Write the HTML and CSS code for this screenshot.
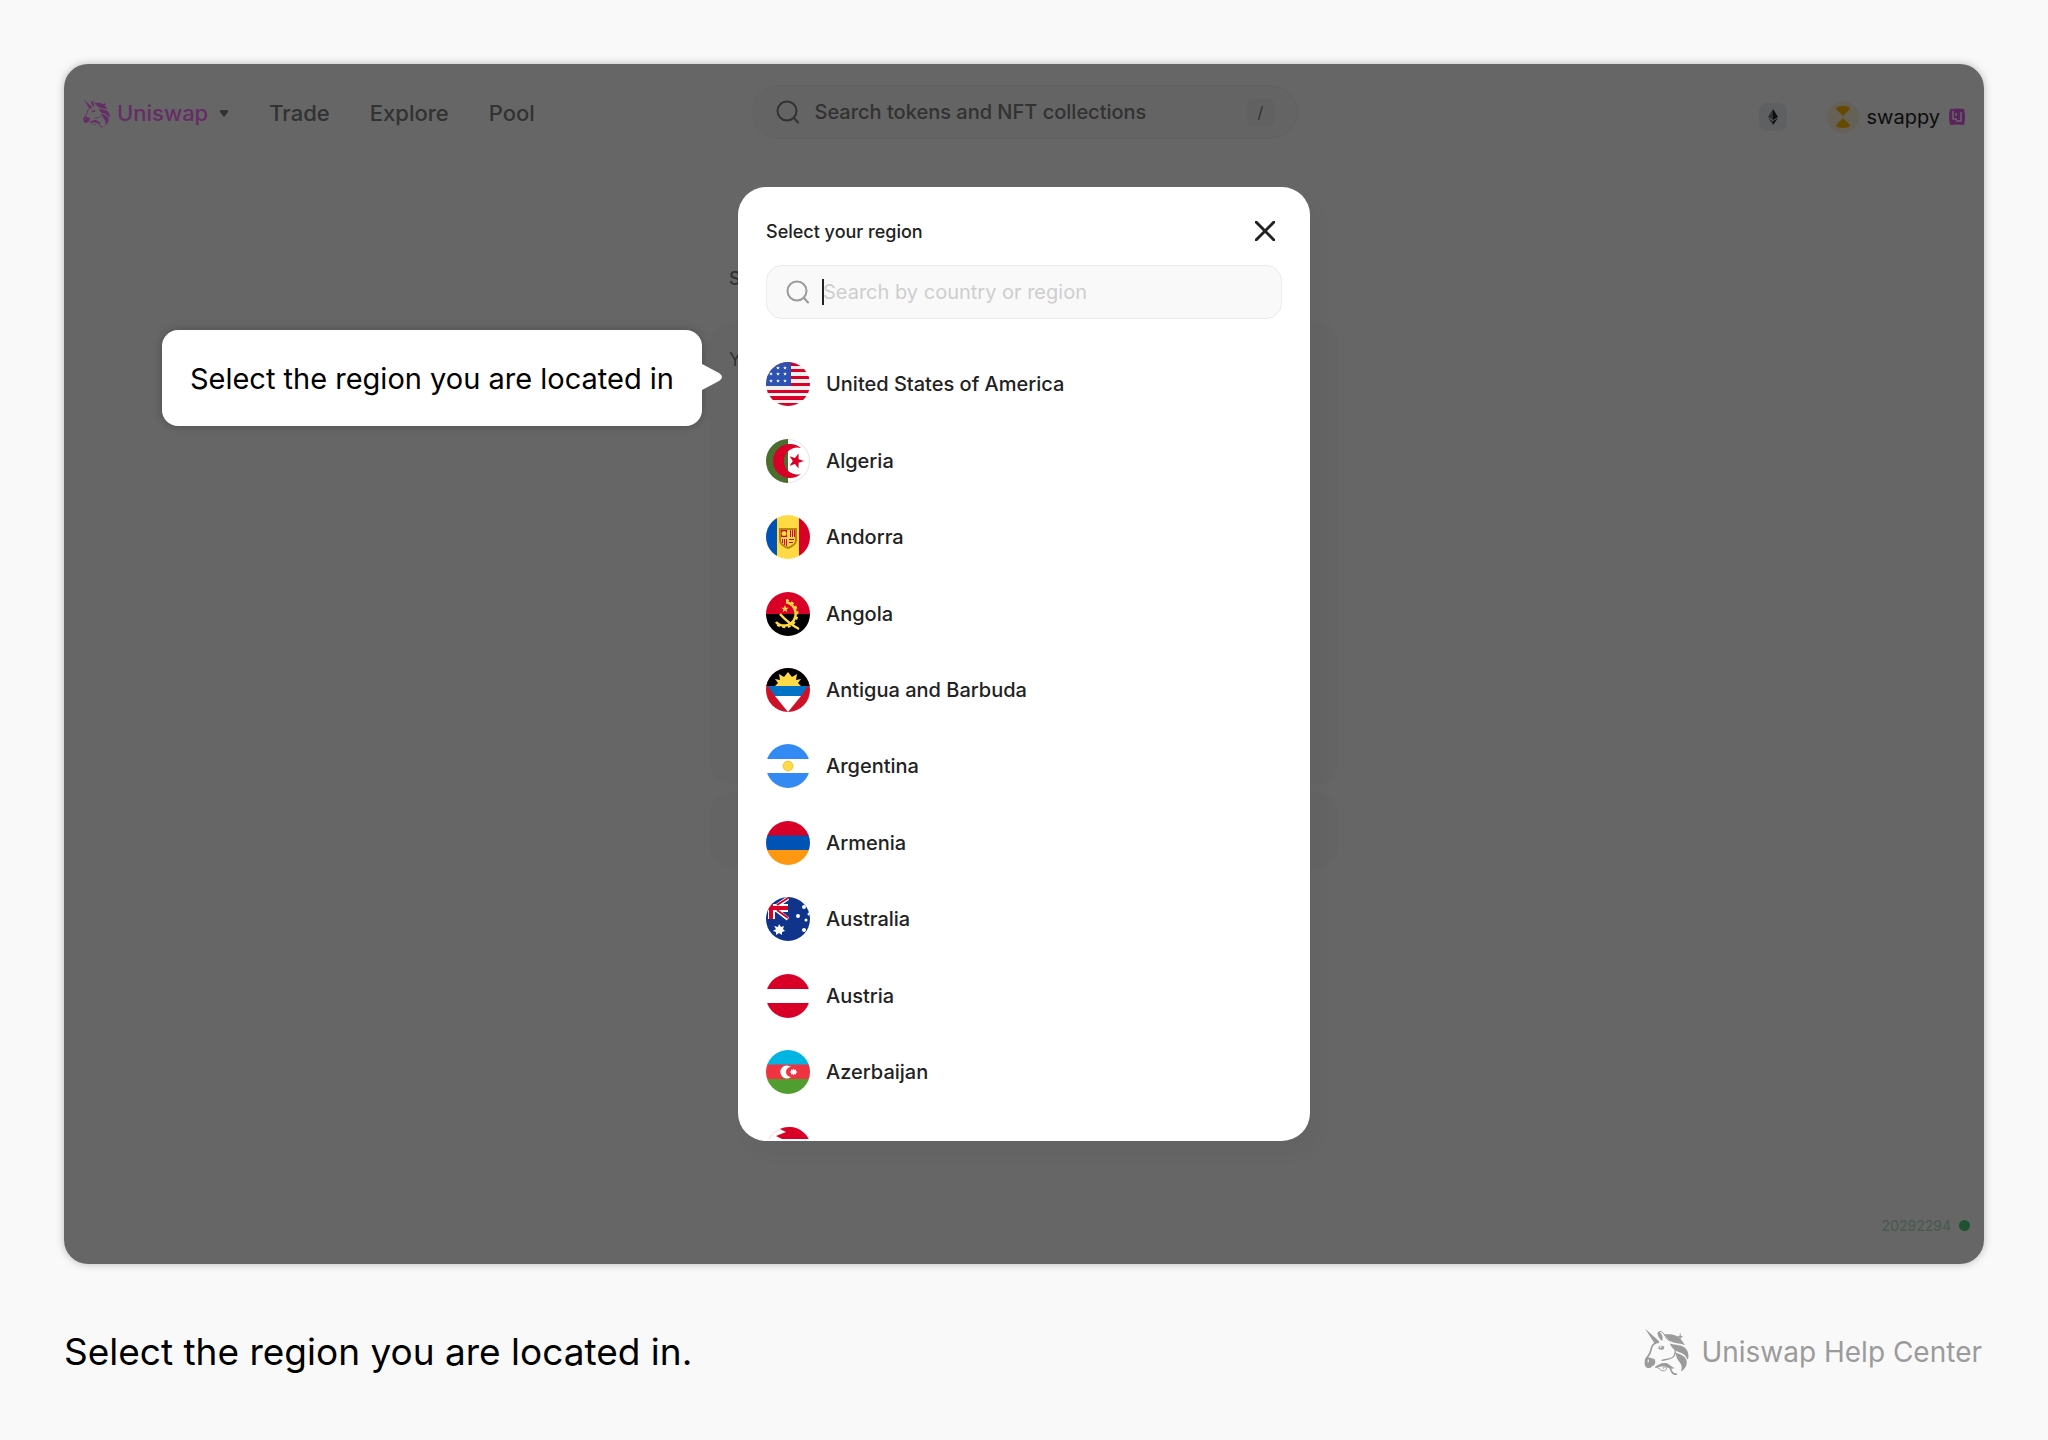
FILE: index.html
```html
<!DOCTYPE html>
<html lang="en">
<head>
  <meta charset="UTF-8">
  <meta name="viewport" content="width=device-width, initial-scale=1.0">
  <title>Uniswap Help Center</title>
  <link rel="stylesheet" href="styles.css">
</head>
<body>

<!-- Shared shapes -->
<svg class="defs" width="0" height="0" aria-hidden="true">
  <symbol id="unicorn" viewBox="0 0 138 146">
    <g fill="currentColor">
      <path d="M3 1 L47 41 C43 43 38 46 34 49 Z"/>
      <path d="M60 20 C80 16 103 20 113 35 C118 40 120 45 126 52 C112 46 100 47 88 43 C77 39 72 30 60 20 Z"/>
      <path d="M79 47 C94 53 121 49 131 66 C137 76 138 87 134 97 C128 82 119 77 106 73 C93 68 85 61 79 47 Z"/>
      <path d="M97 75 C112 79 129 86 131 101 C132 115 125 126 113 133 C118 119 115 111 108 103 C102 95 99 88 97 75 Z"/>
      <path d="M6 91 C14 85 21 93 31 94 C37 100 35 113 28 115 C22 117 22 123 15 122 C6 122 1 115 2 105 C2 100 4 95 6 91 Z"/>
      <path d="M41 13 C42 21 45 32 56 39 C59 30 57 20 47 11 Z"/>
      <ellipse cx="53" cy="60" rx="9" ry="6"/>
      <path d="M33 120 C44 111 54 105 67 107 C78 109 84 120 94 122 C85 127 74 122 66 118 C57 114 48 122 33 120 Z"/>
      <path d="M111 13 L113 23 L120 26 L113 29 L111 38 L109 29 L102 26 L109 23 Z"/>
    </g>
    <g fill="none" stroke="currentColor" stroke-linecap="round">
      <path stroke-width="5" d="M44 43 C34 45 27 49 24 57 C20 69 21 76 13 85 C9 89 6 94 5 100"/>
      <path stroke-width="3" d="M47 10 C56 8 63 18 68 30 C70 34 75 36 80 39"/>
      <path stroke-width="4" d="M95 65 C99 79 92 91 77 94 C69 96 61 97 56 99"/>
      <path stroke-width="3" d="M35 119 C46 119 48 130 58 131 C68 132 72 122 65 119 C60 117 56 121 60 124"/>
      <path stroke-width="5" d="M76 116 C84 124 82 139 94 141 L99 141"/>
    </g>
    <ellipse cx="13" cy="100" rx="2" ry="5" fill="#f9f9f9"/>
    <circle cx="51" cy="58" r="3" fill="#f9f9f9"/>
  </symbol>
  <symbol id="magnifier" viewBox="0 0 24 24">
    <g fill="none" stroke="currentColor" stroke-linecap="round">
      <circle cx="11" cy="11" r="9.5"/>
      <path d="M18 18 L22 22.5"/>
    </g>
  </symbol>
  <symbol id="star" viewBox="-10 -10 20 20">
    <path d="M0 -10 L2.4 -3.2 9.5 -3.1 3.8 1.2 5.9 8.1 0 4 -5.9 8.1 -3.8 1.2 -9.5 -3.1 -2.4 -3.2 Z"/>
  </symbol>
  <clipPath id="round"><circle cx="22" cy="22" r="22"/></clipPath>
</svg>

<main class="stage">
  <header class="topbar">
    <nav class="nav">
      <a class="brand" href="#">
        <svg class="brand-logo"><use href="#unicorn"/></svg>
        <span>Uniswap</span>
        <svg class="brand-arrow" viewBox="0 0 10 8"><path d="M2 1 H8 Q10 1 9 3 L6 7 Q5 8 4 7 L1 3 Q0 1 2 1 Z"/></svg>
      </a>
      <a href="#">Trade</a>
      <a href="#">Explore</a>
      <a href="#">Pool</a>
    </nav>

    <label class="token-search">
      <svg class="search-icon"><use href="#magnifier"/></svg>
      <input type="text" aria-label="Search tokens" placeholder="Search tokens and NFT collections">
      <kbd>/</kbd>
    </label>

    <div class="account">
      <button class="network" aria-label="Network">
        <svg viewBox="0 0 10 16" width="10" height="16">
          <path fill="#777" d="M5 0 L0 8 L5 11 Z M5 12 L0 9 L5 16 Z"/>
          <path fill="#222" d="M5 0 L10 8 L5 11 Z M5 12 L10 9 L5 16 Z"/>
        </svg>
      </button>
      <button class="wallet">
        <svg viewBox="0 0 32 32" width="32" height="32">
          <circle cx="16" cy="16" r="16" fill="#fff2d9"/>
          <path fill="#ffb800" d="M16 15 L9 8 Q9 5 16 5 Q23 5 23 8 Z M16 17 L9 24 Q9 27 16 27 Q23 27 23 24 Z"/>
        </svg>
        <span>swappy</span>
        <svg viewBox="0 0 18 18" width="18" height="18">
          <path fill="#e45be8" d="M2 1 Q9 0 16 1 Q18 9 16 17 Q9 16 2 17 Q0 9 2 1 Z"/>
          <path fill="none" stroke="#fff" stroke-width="1.5" d="M5 3 V11 H9 M8 13 H13 V4 M8 5 V8"/>
        </svg>
      </button>
    </div>
  </header>

  <section class="swap">
    <h2>Swap</h2>
    <div class="swap-panel">You're buying</div>
    <div class="swap-account"></div>
  </section>

  <div class="block-number">20292294 <span class="dot"></span></div>

  <!-- Region picker -->
  <div class="overlay">
    <div class="modal" role="dialog" aria-labelledby="modalTitle">
      <div class="modal-header">
        <h1 id="modalTitle">Select your region</h1>
        <button class="close-btn" aria-label="Close">
          <svg viewBox="0 0 20 20" width="20" height="20"><path d="M1 1 L19 19 M19 1 L1 19"/></svg>
        </button>
      </div>

      <label class="region-search">
        <svg class="search-icon"><use href="#magnifier"/></svg>
        <span class="caret"></span>
        <input type="text" aria-label="Search regions" placeholder="Search by country or region">
      </label>

      <div class="region-scroll">
        <ul class="region-list">
          <li>
            <svg class="flag" viewBox="0 0 44 44"><g clip-path="url(#round)">
              <path fill="#f0f0f0" d="M0 0 H44 V44 H0 Z"/>
              <path fill="#d80027" d="M0 0 H44 V4 H0 Z M0 7 H44 V10 H0 Z M0 14 H44 V17 H0 Z M0 21 H44 V24 H0 Z M0 28 H44 V31 H0 Z M0 34 H44 V38 H0 Z M0 41 H44 V44 H0 Z"/>
              <path fill="#2e52b2" d="M0 0 H25 V24 H0 Z"/>
              <g fill="#fff">
                <use href="#star" x="10" y="4" width="4" height="4"/><use href="#star" x="17" y="4" width="4" height="4"/>
                <use href="#star" x="3" y="10" width="4" height="4"/><use href="#star" x="10" y="10" width="4" height="4"/><use href="#star" x="17" y="10" width="4" height="4"/>
                <use href="#star" x="3" y="17" width="4" height="4"/><use href="#star" x="10" y="17" width="4" height="4"/><use href="#star" x="17" y="17" width="4" height="4"/>
              </g>
            </g></svg>
            <span>United States of America</span>
          </li>
          <li>
            <svg class="flag" viewBox="0 0 44 44">
              <circle cx="22" cy="22" r="21.5" fill="#fff" stroke="#e4e4e4"/>
              <path fill="#496e2d" d="M22 0 A22 22 0 0 0 22 44 Z"/>
              <path fill="#d80027" d="M35 9 A17 17 0 1 0 35 35 A13.5 13.5 0 1 1 35 9 Z"/>
              <use href="#star" x="22" y="14" width="16" height="16" fill="#d80027" transform="rotate(18 30 22)"/>
            </svg>
            <span>Algeria</span>
          </li>
          <li>
            <svg class="flag" viewBox="0 0 44 44"><g clip-path="url(#round)">
              <path fill="#0052b4" d="M0 0 H11 V44 H0 Z"/>
              <path fill="#ffda44" d="M11 0 H33 V44 H11 Z"/>
              <path fill="#d80027" d="M33 0 H44 V44 H33 Z"/>
              <path fill="#ffda44" stroke="#b8860b" stroke-width="2" d="M14 14 H30 V25 Q30 30 22 33 Q14 30 14 25 Z"/>
              <path fill="#d80027" d="M15 15 H21 V22 H15 Z M16 24 H17 V28 H16 Z M18 24 H19 V30 H18 Z M20 24 H21 V31 H20 Z M24 15 H25 V22 H24 Z M26 15 H27 V22 H26 Z M28 15 H29 V22 H28 Z M23 24 H28 V25 H23 Z M23 27 H27 V28 H23 Z"/>
              <circle cx="18" cy="18.5" r="2.5" fill="#ffda44"/>
            </g></svg>
            <span>Andorra</span>
          </li>
          <li>
            <svg class="flag" viewBox="0 0 44 44"><g clip-path="url(#round)">
              <path fill="#d80027" d="M0 0 H44 V22 H0 Z"/>
              <path d="M0 22 H44 V44 H0 Z"/>
              <g fill="none" stroke="#ffda44">
                <path stroke-width="2.5" d="M20 10 A12 12 0 0 1 22 33 Q14 35 10 30"/>
                <path stroke-width="2" stroke-dasharray="3 2.6" d="M20 8 A14 14 0 0 1 22 35 Q14 36 9 31"/>
                <path stroke-width="2.5" d="M14 22 Q22 31 33 37"/>
              </g>
              <use href="#star" x="15" y="13" width="8" height="8" fill="#ffda44"/>
            </g></svg>
            <span>Angola</span>
          </li>
          <li>
            <svg class="flag" viewBox="0 0 44 44"><g clip-path="url(#round)">
              <path fill="#ce1126" d="M0 0 H44 V44 H0 Z"/>
              <path d="M0 0 H44 V18 H0 Z"/>
              <path fill="#ffda44" d="M9 18 L12 15 9 11 14 12 13 6 18 9 22 4 26 9 31 6 30 12 35 11 32 15 35 18 Z"/>
              <path fill="#0072c6" d="M2 18 H42 L35 28 H9 Z"/>
              <path fill="#fff" d="M9 28 H35 L22 44 Z"/>
            </g></svg>
            <span>Antigua and Barbuda</span>
          </li>
          <li>
            <svg class="flag" viewBox="0 0 44 44"><g clip-path="url(#round)">
              <path fill="#fff" d="M0 0 H44 V44 H0 Z"/>
              <path fill="#338af3" d="M0 0 H44 V15 H0 Z M0 29 H44 V44 H0 Z"/>
              <circle cx="22" cy="22" r="5" fill="#ffda44" stroke="#d6ab00" stroke-width=".5"/>
            </g></svg>
            <span>Argentina</span>
          </li>
          <li>
            <svg class="flag" viewBox="0 0 44 44"><g clip-path="url(#round)">
              <path fill="#d80027" d="M0 0 H44 V15 H0 Z"/>
              <path fill="#0052b4" d="M0 14.5 H44 V29 H0 Z"/>
              <path fill="#ff9811" d="M0 29 H44 V44 H0 Z"/>
            </g></svg>
            <span>Armenia</span>
          </li>
          <li>
            <svg class="flag" viewBox="0 0 44 44"><g clip-path="url(#round)">
              <path fill="#10338c" d="M0 0 H44 V44 H0 Z"/>
              <path fill="none" stroke="#fff" stroke-width="4" d="M8 11 L22 1 M8 11 L22 22"/>
              <path fill="#fff" d="M2 7 H22 V15 H9 V22 H2 Z"/>
              <path fill="none" stroke="#d80027" stroke-width="2" d="M11 8 L22 1 M11 13 L22 21"/>
              <path fill="#d80027" d="M0 9 H22 V13 H7 V22 H3 V13 H0 Z M3 6 H7 V10 H3 Z"/>
              <g fill="#fff">
                <path d="M13 27 L15 30 18 29 17 32 19 34 16 35 16 38 13 36 10 38 10 35 7 34 10 32 8 29 12 30 Z"/>
                <circle cx="32" cy="19" r="2"/><circle cx="38" cy="10" r="2"/><circle cx="40" cy="23" r="1.5"/>
                <circle cx="38" cy="33" r="2"/><circle cx="43" cy="17" r="1.5"/>
              </g>
            </g></svg>
            <span>Australia</span>
          </li>
          <li>
            <svg class="flag" viewBox="0 0 44 44"><g clip-path="url(#round)">
              <path fill="#fff" d="M0 0 H44 V44 H0 Z"/>
              <path fill="#d80027" d="M0 0 H44 V15 H0 Z M0 29 H44 V44 H0 Z"/>
            </g></svg>
            <span>Austria</span>
          </li>
          <li>
            <svg class="flag" viewBox="0 0 44 44"><g clip-path="url(#round)">
              <path fill="#00b5e2" d="M0 0 H44 V15 H0 Z"/>
              <path fill="#ef3340" d="M0 14.5 H44 V29 H0 Z"/>
              <path fill="#509e2f" d="M0 29 H44 V44 H0 Z"/>
              <path fill="#fff" d="M25 17 A6.500 6.500 0 1 0 25 27 A5 5 0 1 1 25 17 Z"/>
              <path fill="#fff" d="M27.500 18.500 L28.500 20 30 19.500 30 21 31.500 22 30 23 30 24.500 28.500 24 27.500 25.500 26.500 24 25 24.500 25 23 24 22 25 21 25 19.500 26.500 20 Z"/>
            </g></svg>
            <span>Azerbaijan</span>
          </li>
          <li>
            <svg class="flag" viewBox="0 0 44 44">
              <circle cx="22" cy="22" r="21.5" fill="#fff" stroke="#f7d5dc"/>
              <path fill="#d80027" d="M14 2 A22 22 0 1 1 14 42 L20 38 10 34 20 29 10 25 20 20 10 15 20 14 10 9 20 5 Z"/>
            </svg>
          </li>
        </ul>
      </div>

      <div class="callout">Select the region you are located in
        <svg class="callout-tail" viewBox="0 0 20 26" width="20" height="26"><path fill="#fff" d="M0 0 L17 9 Q23 13 17 17 L0 26 Z"/></svg>
      </div>
    </div>
  </div>
</main>

<footer class="footer">
  <p>Select the region you are located in.</p>
  <a class="help-center" href="#">
    <svg class="help-logo"><use href="#unicorn"/></svg>
    <span>Uniswap Help Center</span>
  </a>
</footer>

</body>
</html>
```
FILE: styles.css
```css
/* Global Styles */
* {
  box-sizing: border-box;
}

body {
  font-family: Inter, 'Liberation Sans', sans-serif;
  margin: 0;
  padding: 64px;
  background-color: #f9f9f9;
  color: #222;
}

h1, h2, p, ul {
  margin: 0;
  padding: 0;
}

a {
  color: inherit;
  text-decoration: none;
}

button, input {
  font: inherit;
  color: inherit;
  border: none;
  padding: 0;
  background: none;
}

button {
  cursor: pointer;
}

input {
  min-width: 0;
  flex: 1;
  outline: none;
}

.defs {
  position: absolute;
}

/* Page behind the modal */
.stage {
  position: relative;
  min-height: calc(100vh - 240px);
  overflow: hidden;
  border-radius: 24px;
  background-color: #fff;
  box-shadow: 0 0 8px rgba(0, 0, 0, 0.25);
}

.topbar {
  display: grid;
  grid-template-columns: 1fr 546px 1fr;
  align-items: center;
  padding: 21px 18px 0 19px;
}

.nav {
  display: flex;
  align-items: center;
  gap: 40px;
  padding-top: 2px;
  font-size: 22px;
  font-weight: 500;
  color: #7d7d7d;
}

.brand {
  display: flex;
  align-items: center;
  gap: 7px;
  color: #fc72ff;
}

.brand-logo {
  width: 27px;
  height: 29px;
}

.brand-arrow {
  width: 10px;
  height: 8px;
  margin-left: 4px;
  fill: #7d7d7d;
}

.search-icon {
  width: 24px;
  height: 24px;
  stroke-width: 2;
}

.token-search {
  display: flex;
  align-items: center;
  gap: 15px;
  height: 54px;
  padding: 0 22px 0 23px;
  border: 1px solid #f2f2f2;
  border-radius: 27px;
  background-color: #fbfbfb;
  font-size: 20px;
  font-weight: 500;
  color: #7d7d7d;
}

.token-search input::placeholder {
  color: #7d7d7d;
  opacity: 1;
}

kbd {
  width: 28px;
  border-radius: 6px;
  background-color: #f2f2f2;
  font: 16px/27px Inter, sans-serif;
  text-align: center;
}

.account {
  display: flex;
  justify-content: flex-end;
  align-items: center;
  gap: 40px;
  padding-top: 10px;
}

.network {
  display: flex;
  align-items: center;
  justify-content: center;
  width: 28px;
  height: 28px;
  border-radius: 8px;
  background-color: #eef0f5;
}

.wallet {
  display: flex;
  align-items: center;
  gap: 8px;
  font-size: 20px;
}

.swap {
  width: 630px;
  margin: 128px auto 0;
  font-size: 18px;
  color: #7d7d7d;
}

.swap h2 {
  padding-left: 20px;
  font-size: 18px;
  font-weight: 500;
  line-height: 24px;
}

.swap-panel {
  height: 464px;
  margin-top: 30px;
  padding: 28px 20px;
  border-radius: 24px;
  background-color: #fbfbfb;
}

.swap-account {
  height: 76px;
  margin-top: 7px;
  border-radius: 24px;
  background-color: #f9f9f9;
}

.block-number {
  display: flex;
  align-items: center;
  gap: 8px;
  position: absolute;
  right: 14px;
  bottom: 30px;
  font-size: 14px;
  color: #b1e2c0;
}

.dot {
  width: 11px;
  height: 11px;
  border-radius: 50%;
  background-color: #4bcd7a;
}

/* Region modal */
.overlay {
  position: absolute;
  inset: 0;
  display: flex;
  justify-content: center;
  padding: 123px 0;
  background-color: rgba(0, 0, 0, 0.6);
}

.modal {
  position: relative;
  display: flex;
  flex-direction: column;
  width: 572px;
  padding: 28px 28px 2px;
  border-radius: 28px;
  background-color: #fff;
  box-shadow: 8px 12px 20px rgba(0, 0, 0, 0.03);
}

.modal-header {
  display: flex;
  align-items: center;
  justify-content: space-between;
  height: 32px;
  padding-right: 7px;
}

.modal-header h1 {
  font-size: 18px;
  font-weight: 500;
}

.close-btn {
  display: flex;
}

.close-btn path {
  fill: none;
  stroke: #222;
  stroke-width: 3;
  stroke-linecap: round;
}

.region-search {
  display: flex;
  align-items: center;
  gap: 13px;
  position: relative;
  height: 54px;
  margin-top: 18px;
  padding: 0 19px;
  border: 1px solid #ebebeb;
  border-radius: 16px;
  background-color: #f9f9f9;
  font-size: 20px;
  color: #9b9b9b;
}

.region-search input::placeholder {
  color: #cecece;
  opacity: 1;
}

.caret {
  position: absolute;
  left: 55px;
  width: 2px;
  height: 26px;
  background-color: #222;
}

.region-scroll {
  flex: 1;
  min-height: 0;
  margin-top: 27px;
  overflow: hidden;
}

.region-list {
  display: flex;
  flex-direction: column;
  height: 841px;
  list-style: none;
  font-size: 20px;
  font-weight: 500;
}

.region-list li {
  display: flex;
  flex: 1;
  align-items: center;
  gap: 16px;
}

.flag {
  width: 44px;
  height: 44px;
}

.callout {
  position: absolute;
  top: 143px;
  right: calc(100% + 36px);
  padding: 2px 28px 0;
  border-radius: 16px;
  background-color: #fff;
  box-shadow: 0 0 8px rgba(0, 0, 0, 0.25);
  color: #000;
  font-size: 29px;
  line-height: 94px;
  white-space: nowrap;
}

.callout-tail {
  position: absolute;
  top: 34px;
  left: 100%;
}

/* Footer */
.footer {
  display: flex;
  align-items: center;
  justify-content: space-between;
  padding: 64px 2px 0 0;
}

.footer p {
  color: #000;
  font-size: 37px;
  line-height: 48px;
}

.help-center {
  display: flex;
  align-items: center;
  gap: 12px;
  font-size: 28px;
  color: #9b9b9b;
}

.help-logo {
  width: 45px;
  height: 48px;
}
```
